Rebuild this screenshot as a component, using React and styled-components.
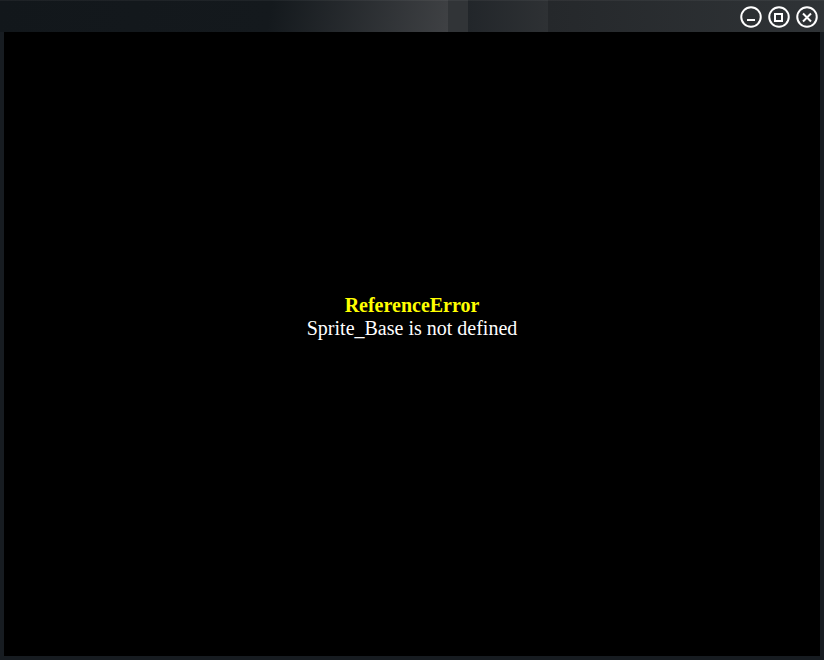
import React from "react";
import styled, { createGlobalStyle } from "styled-components";

const GlobalStyle = createGlobalStyle`
	html, body {
		margin: 0;
		padding: 0;
		background: #000;
	}
`;

function WindowButton({ children }) {
	return (
		<RoundButton>
			<svg width="22" height="22" viewBox="0 0 22 22" fill="none" stroke="#fff" strokeWidth="2">
				<circle cx="11" cy="11" r="9.75" />
				{children}
			</svg>
		</RoundButton>
	);
}

export default function App() {
	return (
		<>
			<GlobalStyle />
			<Frame>
				<TitleBar>
					<Shine />
					<Notch />
					<Tab />
					<TitleRest>
						<WindowButton>
							<path d="M7 14h8" />
						</WindowButton>
						<WindowButton>
							<rect x="7" y="8" width="7" height="7" />
						</WindowButton>
						<WindowButton>
							<path d="M7 7.5l8 8M15 7.5l-8 8" />
						</WindowButton>
					</TitleRest>
				</TitleBar>
				<Canvas>
					<ErrorName>ReferenceError</ErrorName>
					<ErrorMessage>Sprite_Base is not defined</ErrorMessage>
				</Canvas>
			</Frame>
		</>
	);
}

const Frame = styled.div`
	width: 824px;
	height: 660px;
	box-sizing: border-box;
	display: flex;
	flex-direction: column;
	padding: 0 4px 4px;
	background: #171c21;
	overflow: hidden;
`;

const TitleBar = styled.div`
	position: relative;
	height: 32px;
	flex: none;
	display: flex;
	margin: 0 -4px;

	&::before {
		content: "";
		position: absolute;
		top: 0;
		left: 0;
		right: 0;
		height: 1px;
		background: rgba(255, 255, 255, 0.05);
	}
`;

const Shine = styled.div`
	width: 448px;
	background: linear-gradient(100deg, #12171b 0%, #14191d 60%, #3f4144 100%);
`;

const Notch = styled.div`
	width: 20px;
	background: #313437;
`;

const Tab = styled.div`
	width: 80px;
	background: linear-gradient(90deg, #22262a, #2e3134);
`;

const TitleRest = styled.div`
	flex: 1;
	display: flex;
	justify-content: flex-end;
	align-items: center;
	gap: 6px;
	padding: 2px 6px 0 0;
	background: linear-gradient(90deg, #25282b, #2f3336);
`;

const RoundButton = styled.div`
	width: 22px;
	height: 22px;
	display: flex;
`;

const Canvas = styled.div`
	flex: 1;
	display: flex;
	flex-direction: column;
	align-items: center;
	justify-content: center;
	background: #000;
	font-family: "Liberation Serif", "Times New Roman", serif;
	font-size: 20px;
	line-height: 23px;
	padding-bottom: 54px;
`;

const ErrorName = styled.div`
	color: #ff0;
	font-weight: bold;
`;

const ErrorMessage = styled.div`
	color: #fff;
`;
